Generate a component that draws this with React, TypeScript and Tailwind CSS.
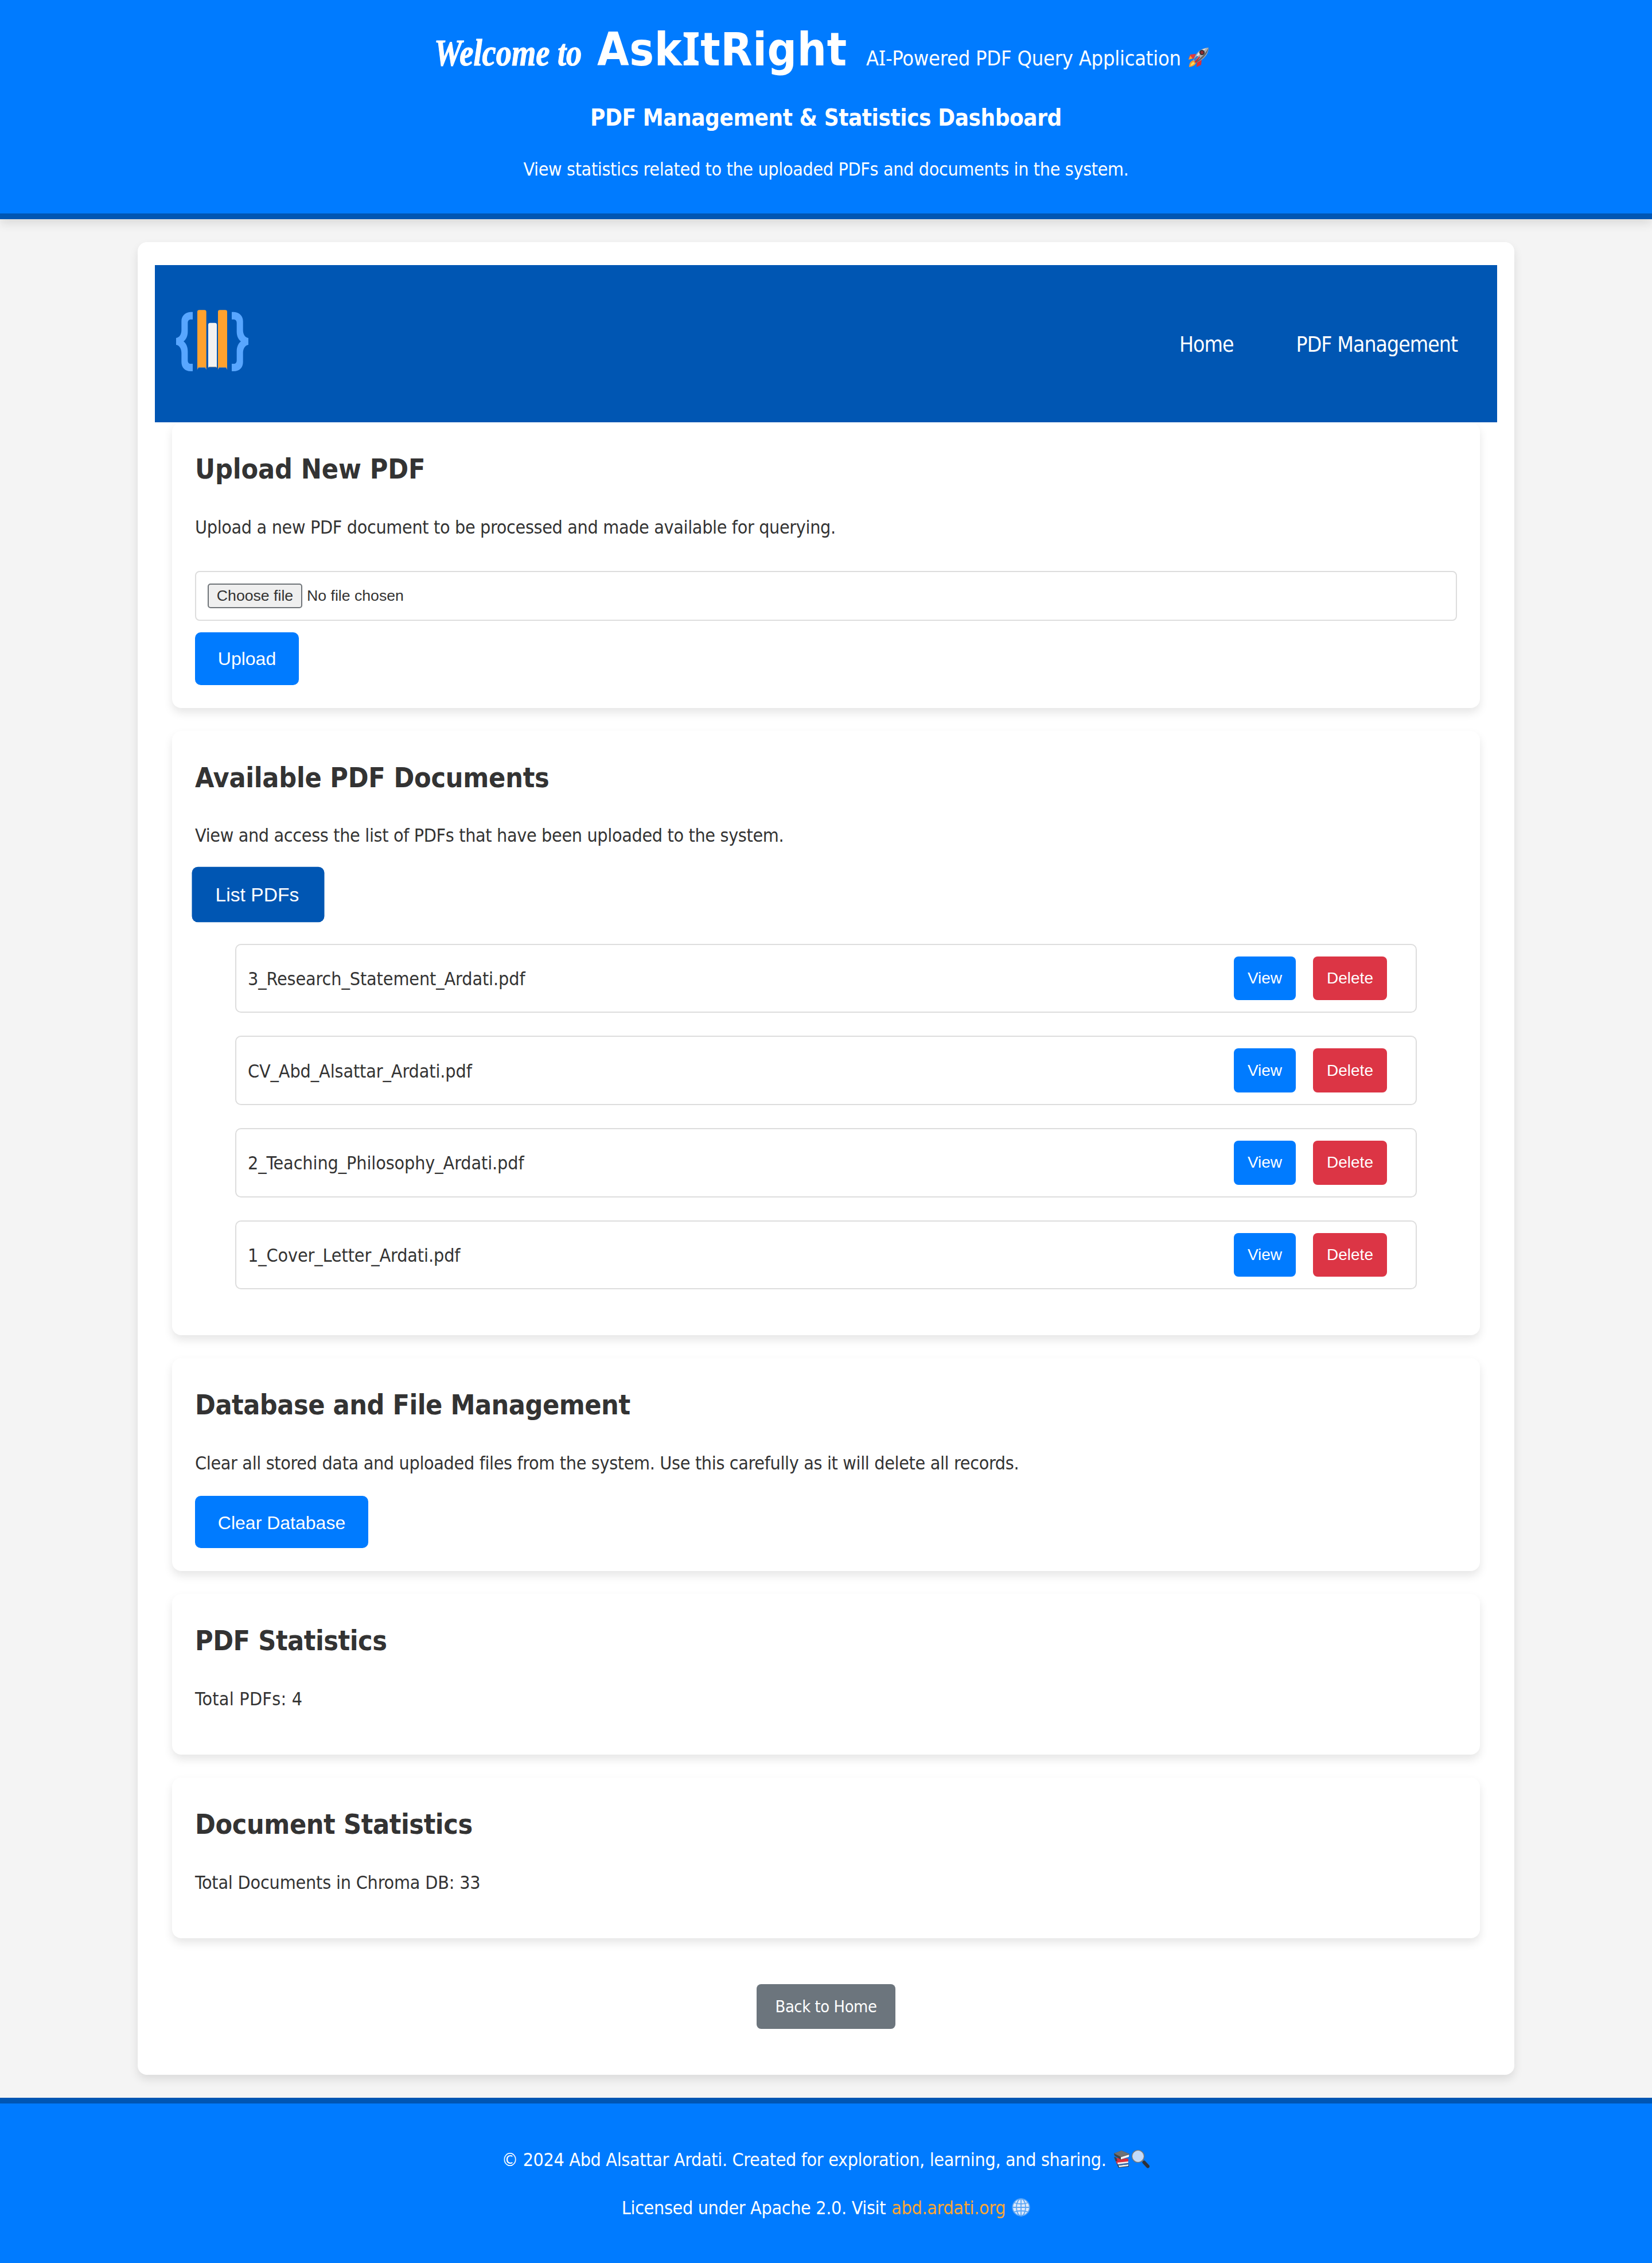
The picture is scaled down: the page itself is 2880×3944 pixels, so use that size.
import type { ReactNode } from "react";

const files = [
  "3_Research_Statement_Ardati.pdf",
  "CV_Abd_Alsattar_Ardati.pdf",
  "2_Teaching_Philosophy_Ardati.pdf",
  "1_Cover_Letter_Ardati.pdf",
];

function Logo() {
  return (
    <svg viewBox="0 0 450 420" className="mt-[-8px] ml-[25px] h-[140px] w-[150px]">
      <g fill="#58a6ff">
        <path d="M123 56H112C82 58 64 78 64 104V150C64 172 54 190 36 192V228C54 230 64 250 64 270V318C64 346 82 366 112 366H123V327H114C102 327 97 320 97 308V262C97 240 90 222 75 210C90 198 97 180 97 158V114C97 102 102 95 114 95H123Z" />
        <path d="M327 56H338C368 58 386 78 386 104V150C386 172 396 190 414 192V228C396 230 386 250 386 270V318C386 346 368 366 338 366H327V327H336C348 327 353 320 353 308V262C353 240 360 222 375 210C360 198 353 180 353 158V114C353 102 348 95 336 95H327Z" />
      </g>
      <path d="M147 356V56Q147 46 157 46H184Q194 46 194 56V356L188 346H153Z" fill="#ffa22e" />
      <path d="M255 356V56Q255 46 265 46H293Q303 46 303 56V356L297 346H261Z" fill="#ffa22e" />
      <path d="M204 347V123Q204 113 214 113H239Q249 113 249 123V347L244 344H209Z" fill="#f2f2f2" />
      <path d="M147 356L153 346H188L194 356M204 347L209 344H244L249 347M255 356L261 346H297L303 356" fill="none" stroke="#8d8f90" strokeWidth="3" />
    </svg>
  );
}

function Rocket() {
  return (
    <svg viewBox="0 0 36 36" className="h-[36px] w-[36px]">
      <path d="M13 12L3 13L0 21L9 20Z" fill="#e23a3c" />
      <path d="M0 22L3 15L7 20Z" fill="#ffa22e" />
      <path d="M23 21L22 31L14 35L15 25Z" fill="#d9303a" />
      <path d="M8 23C3 25 1 29 1 35C7 34 12 32 13 27Z" fill="#ff9d2b" />
      <path d="M8 26C5 28 4 30 3 33C7 32 9 30 11 28Z" fill="#ffd95a" />
      <path d="M35 1C26 1 17 6 12 15L8 23L13 28L20 24C30 18 35 10 35 1Z" fill="#a9b0b9" />
      <path d="M35 1C34 9 28 18 19 24L13 28L11 26C20 21 30 11 35 1Z" fill="#5d646d" />
      <path d="M31 2C24 4 17 9 13 17L11 21C17 15 24 8 31 2Z" fill="#e4e8ec" />
      <circle cx="23.5" cy="9.5" r="4.6" fill="#2d3036" />
      <circle cx="23.5" cy="9.5" r="2.7" fill="#8f2a2f" />
      <path d="M9 21L15 15L17 17L11 25Z" fill="#3879c9" />
      <path d="M10 26L19 16L20 18L13 27Z" fill="#c92c36" />
    </svg>
  );
}

function Books() {
  return (
    <svg viewBox="0 0 32 32" className="h-[32px] w-[32px]">
      <path d="M6 22L10 31L28 29L27 23Z" fill="#30343a" />
      <path d="M10 27L27 25V28L11 30Z" fill="#e8e8e8" />
      <path d="M6 24L26 22L27 25L10 27Z" fill="#2f62a8" />
      <path d="M3 14L7 24L27 22V15Z" fill="#d92f3d" />
      <path d="M8 22L27 20V22.500L9 25Z" fill="#f1f1f1" />
      <path d="M2 12L5 20L8 19L6 13Z" fill="#3b4047" />
      <path d="M2 6L15 1L29 7L28 12L14 17L3 10Z" fill="#3f4347" />
      <path d="M2 6L15 1L29 7L14 12Z" fill="#6d7175" />
      <path d="M14 12.500L28.500 8L28 12L14 16.500Z" fill="#f4f4f4" />
    </svg>
  );
}

function Magnifier() {
  return (
    <svg viewBox="0 0 32 32" className="h-[32px] w-[32px]">
      <path d="M19 18L23 22" stroke="#8b9096" strokeWidth="3" />
      <path d="M22.500 21.500L29 28.500" stroke="#2e3136" strokeWidth="6" strokeLinecap="round" />
      <circle cx="12" cy="11" r="10.300" fill="#c3dbfb" stroke="#6f757b" strokeWidth="1.800" />
      <circle cx="12" cy="11" r="9.600" fill="none" stroke="#d9dde2" strokeWidth=".7" />
    </svg>
  );
}

function Globe() {
  return (
    <svg viewBox="0 0 32 32" className="h-[32px] w-[32px]">
      <circle cx="16" cy="16" r="15" fill="#dfe9f8" />
      <g fill="none" stroke="#5aa5f5" strokeWidth="1.800">
        <circle cx="16" cy="16" r="14.800" />
        <ellipse cx="16" cy="16" rx="8" ry="14.800" />
        <path d="M16 1V31M1 16H31M4 8Q16 12 28 8M4 24Q16 20 28 24" />
      </g>
    </svg>
  );
}

function Card({ title, tracking, children }: { title: string; tracking: string; children: ReactNode }) {
  return (
    <section className="rounded-[16px] bg-white px-[40px] pt-[43px] pb-[40px] shadow-[0_8px_16px_rgba(0,0,0,0.1)]">
      <h2 className={`mb-[38px] text-[48px] leading-[76.8px] font-bold ${tracking}`}>{title}</h2>
      {children}
    </section>
  );
}

function Text({ tracking = "tracking-[-0.35px]", children }: { tracking?: string; children: ReactNode }) {
  return <p className={`text-[32px] leading-[51.2px] ${tracking}`}>{children}</p>;
}

export default function App() {
  return (
    <div className="h-[3944px] w-[2880px] overflow-hidden bg-[#f4f4f4] font-['DejaVu_Sans_Condensed','DejaVu_Sans',sans-serif] text-[#333]">
      <header className="h-[382px] border-b-[10px] border-[#0056b3] bg-[#007bff] pt-[23px] text-center text-white shadow-[0_8px_16px_rgba(0,0,0,0.1)]">
        <h1 className="flex h-[125px] items-baseline justify-center text-left whitespace-nowrap">
          <span className="w-[284px]">
            <span className="inline-block origin-bottom-left scale-x-[0.824] font-['Brush_Script_MT','Liberation_Serif',cursive] text-[66px] leading-[100px] font-bold italic [-webkit-text-stroke:1.2px_white]">
              Welcome to
            </span>
          </span>
          <span className="w-[469px] text-[80px] leading-[128px] font-bold tracking-[0.65px]">
            Ask<span className="font-['Noto_Sans'] leading-none">I</span>tRight
          </span>
          <span className="w-[562px] text-[36px] tracking-[-0.25px]">
            A<span className="font-['Noto_Sans']">I</span>-Powered PDF Query Application
          </span>
          <span className="w-[51px] translate-y-[4px]">
            <Rocket />
          </span>
        </h1>
        <h2 className="mt-[25px] text-[40px] leading-[64px] font-bold tracking-[-0.42px]">
          PDF Management &amp; Statistics Dashboard
        </h2>
        <p className="mt-[33px] text-[32px] leading-[51px] tracking-[-0.36px]">
          View statistics related to the uploaded PDFs and documents in the system.
        </p>
      </header>

      <main className="mx-auto mt-[40px] h-[3194px] w-[2400px] rounded-[16px] bg-white px-[30px] pt-[40px] shadow-[0_8px_16px_rgba(0,0,0,0.1)]">
        <nav className="relative z-10 flex h-[274px] items-center justify-between bg-[#0056b3] pr-[69px]">
          <Logo />
          <div className="mt-[3px] flex gap-[109px] text-[37px] tracking-[-0.95px] text-white">
            <a>Home</a>
            <a>PDF Management</a>
          </div>
        </nav>

        <div className="flex flex-col gap-[40px] px-[30px]">
          <Card title="Upload New PDF" tracking="tracking-[-0.1px]">
            <Text>Upload a new PDF document to be processed and made available for querying.</Text>
            <div className="mt-[50px] flex h-[86.700px] items-center rounded-[8px] border-2 border-[#ddd] px-[20px] font-['Liberation_Sans',sans-serif] text-[26.667px]">
              <button className="h-[43px] w-[165px] rounded-[5px] border-2 border-[#6f7478] bg-[#efefef] leading-[38px]">Choose file</button>
              <span className="ml-[8px] leading-[38px]">No file chosen</span>
            </div>
            <button className="mt-[20px] block h-[92px] w-[181px] rounded-[10px] bg-[#007bff] font-['Liberation_Sans',sans-serif] text-[32px] text-white">Upload</button>
          </Card>

          <Card title="Available PDF Documents" tracking="tracking-[-0.24px]">
            <Text>View and access the list of PDFs that have been uploaded to the system.</Text>
            <button className="mt-[30px] block h-[92px] w-[220px] scale-105 rounded-[10px] bg-[#0056b3] pr-[3px] font-['Liberation_Sans',sans-serif] text-[32px] text-white">List PDFs</button>
            <ul className="my-[40px] flex flex-col gap-[40px] px-[70px]">
              {files.map((name) => (
                <li key={name} className="flex h-[120.667px] items-center rounded-[10px] border-2 border-[#ddd] pr-[50px] pl-[20px] font-['Liberation_Sans',sans-serif] text-[28px]">
                  <span className="mt-[2px] flex-1 font-['DejaVu_Sans_Condensed','DejaVu_Sans',sans-serif] text-[32px] tracking-[-0.11px]">{name}</span>
                  <button className="h-[76.667px] w-[108px] rounded-[8px] bg-[#007bff] text-white">View</button>
                  <button className="ml-[30px] h-[76.667px] w-[129px] rounded-[8px] bg-[#dc3545] text-white">Delete</button>
                </li>
              ))}
            </ul>
          </Card>

          <Card title="Database and File Management" tracking="tracking-[-0.48px]">
            <Text>Clear all stored data and uploaded files from the system. Use this carefully as it will delete all records.</Text>
            <button className="mt-[30.700px] block h-[91.300px] w-[302px] rounded-[10px] bg-[#007bff] pt-[2px] font-['Liberation_Sans',sans-serif] text-[32px] text-white">Clear Database</button>
          </Card>

          <Card title="PDF Statistics" tracking="tracking-[-0.45px]">
            <Text tracking="tracking-[0.25px]">Total PDFs: 4</Text>
            <div className="h-[31px]" />
          </Card>

          <Card title="Document Statistics" tracking="tracking-[-0.4px]">
            <Text tracking="tracking-[-0.2px]">Total Documents in Chroma DB: 33</Text>
            <div className="h-[31px]" />
          </Card>
        </div>

        <button className="mx-auto mt-[79.500px] block h-[78px] w-[242px] rounded-[8px] bg-[#6c757d] pt-[2px] text-[28.800px] tracking-[-0.41px] text-white">Back to Home</button>
      </main>

      <footer className="mt-[40px] h-[288px] border-t-[10px] border-[#0056b3] bg-[#007bff] pt-[73px] text-[32px] leading-[51px] tracking-[-0.34px] text-white">
        <p className="flex items-center justify-center pr-[2px]">
          © 2024 Abd Alsattar Ardati. Created for exploration, learning, and sharing.
          <span className="mb-[3px] ml-[11px] flex">
            <Books />
            <Magnifier />
          </span>
        </p>
        <p className="mt-[33px] flex items-center justify-center">
          Licensed under Apache 2.0. Visit
          <a className="ml-[10px] text-[#ffa733]">abd.ardati.org</a>
          <span className="mb-[3px] ml-[11px]">
            <Globe />
          </span>
        </p>
      </footer>
    </div>
  );
}
